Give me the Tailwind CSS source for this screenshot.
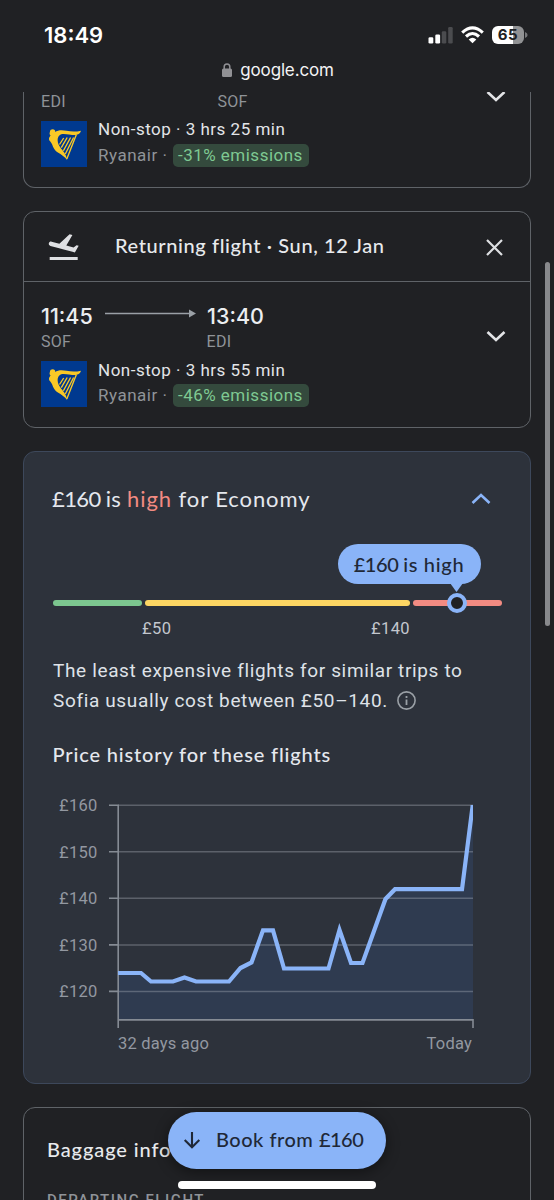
<!DOCTYPE html>
<html lang="en">
<head>
<meta charset="utf-8">
<title>Flights</title>
<script src="https://cdn.jsdelivr.net/npm/@tailwindcss/browser@4"></script>
</head>
<body class="bg-[#202124]">
<svg class="hidden">
  <symbol id="harp" viewBox="0 0 46 46">
    <path fill="#f9c926" d="M9 10.500C9 8.500 12 7.500 13.600 8.900C14.300 9.600 14.300 10.300 14 10.900C17 8.900 21.500 8.900 25.500 9.800C30.500 10.900 35 10.900 40 9.700C39.300 11.800 38.200 13 36.500 13.500L34.600 14C29 14 25 12.600 21.500 13C18 13.500 16.500 16 16.700 20C17 24.500 20.800 28 23.500 32C24.700 34 25.400 35.700 25.900 37.500L26 39C24 36 20.500 33.800 16.500 31.300C12.500 28.800 11.800 24 10.200 21.700C9 20 7.800 19.500 8 17.500C8.200 15.800 9.300 15.300 9.500 14.200C8 13.500 8.700 11.900 9 10.500Z"/>
    <path fill="none" stroke="#f9c926" stroke-width="1.350" d="M22.700 17L18.500 23.500M26.200 16.500L20.300 26.700M29.600 16.500L22.400 29.800M32.600 16.500L24.300 33M35.400 13.500L25.800 38"/>
  </symbol>
</svg>
<div class="relative h-[1200px] w-[554px] overflow-hidden bg-[#202124] font-['Roboto',sans-serif]">

  <!-- Status bar and address -->
  <header class="h-[92px]">
    <div class="flex h-[60px] items-start justify-between pt-[22px] pr-[26px] pl-11">
      <div class="font-['Inter',sans-serif] text-[22px] leading-[27px] font-semibold text-white">18:49</div>
      <div class="flex items-start pt-1">
        <svg class="mt-[1px] h-[17px] w-[25px]" viewBox="0 0 25 17"><g fill="#fff"><rect x="0.500" y="10.200" width="4.800" height="6.300" rx="1.300"/><rect x="7.300" y="7.500" width="4.800" height="9" rx="1.300"/></g><g fill="#4b4c4f"><rect x="13.800" y="4.200" width="4.500" height="12.300" rx="1.300"/><rect x="20.200" y="0" width="4.500" height="16.500" rx="1.300"/></g></svg>
        <svg class="ml-2 h-[18px] w-[23px]" viewBox="0 0 23 18"><g fill="none" stroke="#fff" stroke-width="3.100"><path d="M1.200 6.600Q11.500 -2.700 21.800 6.600"/><path d="M5 10.500Q11.500 4.500 18 10.500"/></g><path fill="#fff" d="M7.700 13.400Q11.500 10.200 15.300 13.400L11.500 17.200Z"/></svg>
        <div class="ml-2 flex h-[18px] w-[32px] items-center justify-center rounded-[6px] bg-linear-to-r from-white from-65% to-[#919294] to-65% font-['Inter',sans-serif] text-[15px] leading-[18px] font-bold tracking-[0.5px] text-[#202124]">65</div>
        <svg class="mt-[6px] ml-[1px] h-[6px] w-[3px]" viewBox="0 0 3 6"><path fill="#76777a" d="M0 0Q2.600 1 2.600 3Q2.600 5 0 6Z"/></svg>
      </div>
    </div>
    <div class="flex justify-center gap-[8px] pl-[2px]">
      <svg class="mt-[3px] h-[14px] w-[10px]" viewBox="0 0 10 14"><rect y="5.500" width="10" height="8.500" rx="1.500" fill="#919195"/><path d="M2.200 6V3.800a2.800 2.800 0 0 1 5.600 0V6" fill="none" stroke="#919195" stroke-width="1.500"/></svg>
      <div class="font-['Inter',sans-serif] text-[17px] leading-5 tracking-[-0.15px] text-[#f3f3f4]">google.com</div>
    </div>
  </header>

  <main class="flex flex-col gap-[23px] px-[23px]">
    <!-- Departing flight, scrolled under the address bar -->
    <section class="flex h-24 flex-col overflow-hidden rounded-b-xl border-x-[1.5px] border-b-[1.5px] border-[#5f6368] pr-6 pl-[17px]">
      <div class="flex h-[28px] justify-between text-base leading-[19px] text-[#8f9398]">
        <div class="flex"><span class="w-[176.500px] tracking-[0.3px]">EDI</span><span class="tracking-[0.3px]">SOF</span></div>
        <svg class="mt-[-2px] h-[12px] w-[20px]" viewBox="0 0 20 12"><path d="M1.500 2L10 10L18.500 2" fill="none" stroke="#e3e4e7" stroke-width="2.600"/></svg>
      </div>
      <div class="flex gap-[11px]">
        <div class="mt-[1px] h-[46px] w-[46px] bg-[#00398f]"><svg class="h-[46px] w-[46px]"><use href="#harp"/></svg></div>
        <div class="text-[17px] whitespace-nowrap">
          <div class="leading-[19px] tracking-[0.5px] text-[#e3e5e8]">Non-stop · 3 hrs 25 min</div>
          <div class="mt-[5px] flex items-center leading-[23px] text-[#8f9398]"><span class="w-[75px] tracking-[0.5px]">Ryanair ·</span><span class="h-[23px] w-[136px] rounded-[5px] bg-[#344a3d] pl-[5px] tracking-[0.48px] text-[#7fc992]">-31% emissions</span></div>
        </div>
      </div>
    </section>

    <!-- Returning flight -->
    <section class="h-[217px] rounded-xl border-[1.5px] border-[#5f6368]">
      <div class="flex h-[70px] items-center border-b-[1.5px] border-[#5f6368] pr-[27px] pl-[22px]">
        <svg class="h-[35.4px] w-[35.4px] shrink-0 -scale-x-100" viewBox="0 0 24 24" fill="#dfe0e3"><path d="M2.500 19h19v2h-19zM22.070 9.640c-.21-.8-1.040-1.280-1.840-1.060L14.920 10l-6.900-6.430-1.930.51 4.140 7.170-4.970 1.330-1.970-1.540-1.450.39 1.820 3.160.77 1.330 1.600-.43 5.310-1.420 4.350-1.160L21 11.490c.81-.23 1.280-1.050 1.070-1.850z"/></svg>
        <div class="mt-[-4px] ml-[33.600px] font-['Lato',sans-serif] text-[20px] leading-6 font-medium tracking-[0.61px] whitespace-nowrap text-[#e8eaed]">Returning flight · Sun, 12 Jan</div>
        <svg class="mt-[2px] ml-auto h-[17px] w-[17px]" viewBox="0 0 17 17"><path d="M1 1L16 16M16 1L1 16" stroke="#dddfe2" stroke-width="2.200"/></svg>
      </div>
      <div class="flex justify-between pr-6 pl-[17px]">
        <div>
          <div class="mt-[20px] flex font-['Inter',sans-serif] text-[21.500px] leading-[28px] font-medium whitespace-nowrap text-[#eceef1]">
            <span class="w-[64px]">11:45</span>
            <svg class="mt-[7px] mr-[11px] h-[10px] w-[91px]" viewBox="0 0 91 10"><path d="M0 4.500H86" stroke="#9aa0a6" stroke-width="1.600"/><path d="M84 .5L91 4.500L84 8.500Z" fill="#9aa0a6"/></svg>
            <span>13:40</span>
          </div>
          <div class="mt-[2px] flex text-base leading-[19px] tracking-[0.3px] text-[#8f9398]"><span class="w-[165.500px]">SOF</span><span>EDI</span></div>
        </div>
        <svg class="mt-[48px] h-[12px] w-[20px]" viewBox="0 0 20 12"><path d="M1.500 2L10 10L18.500 2" fill="none" stroke="#e3e4e7" stroke-width="2.600"/></svg>
      </div>
      <div class="mt-[9px] flex gap-[11px] pl-[17px]">
        <div class="mt-[1px] h-[46px] w-[46px] bg-[#00398f]"><svg class="h-[46px] w-[46px]"><use href="#harp"/></svg></div>
        <div class="text-[17px] whitespace-nowrap">
          <div class="mt-[1px] leading-[19px] tracking-[0.5px] text-[#e3e5e8]">Non-stop · 3 hrs 55 min</div>
          <div class="mt-[4px] flex items-center leading-[23px] text-[#8f9398]"><span class="w-[75px] tracking-[0.5px]">Ryanair ·</span><span class="h-[23px] w-[136px] rounded-[5px] bg-[#344a3d] pl-[5px] tracking-[0.48px] text-[#7fc992]">-46% emissions</span></div>
        </div>
      </div>
    </section>

    <!-- Price insight -->
    <section class="h-[633px] rounded-xl border-[1.5px] border-[#3d485b] bg-[#2d323b] px-7">
      <div class="mt-[33px] flex items-center justify-between pr-[11px]">
        <h2 class="font-['Lato',sans-serif] text-[22px] leading-[28px] tracking-[0.92px] whitespace-nowrap text-[#e5e8ee]"><span class="tracking-[-0.6px]">£160 </span><span class="tracking-[0.3px]">is </span><span class="text-[#f28b82]">high</span> for Economy</h2>
        <svg class="h-[12px] w-[20px]" viewBox="0 0 20 12"><path d="M1.500 10L10 2L18.500 10" fill="none" stroke="#8ab4f8" stroke-width="2.600"/></svg>
      </div>
      <div class="relative mt-[87px] ml-[0.5px] flex h-[6px] w-[449px] gap-[3px]">
        <div class="w-[89px] rounded-full bg-[#7cc68f]"></div>
        <div class="w-[265px] rounded-full bg-[#fdd663]"></div>
        <div class="w-[89px] rounded-full bg-[#f28b82]"></div>
        <div class="absolute top-[-56.5px] left-[285px] h-10 w-[143px] rounded-full bg-[#8ab4f8] text-center font-['Lato',sans-serif] text-[20px] leading-[40px] font-medium tracking-[0.7px] text-[#202837]"><span class="tracking-[-0.4px]">£160 </span>is high</div>
        <svg class="absolute top-[-17px] left-[397px] h-[9px] w-[13px]" viewBox="0 0 13 9"><path d="M0 0H13L6.500 9Z" fill="#8ab4f8"/></svg>
        <div class="absolute top-[-7px] left-[394px] h-5 w-5 rounded-full border-[4.500px] border-[#8ab4f8] bg-[#202124]"></div>
      </div>
      <div class="mt-[13px] flex text-[16.500px] leading-[20px] tracking-[0.4px] text-[#c3c7ce]"><span class="ml-[90px] w-[229px]">£50</span><span>£140</span></div>
      <div class="mt-[17px] pl-[1px] text-[19px] leading-[30px] tracking-[0.64px] whitespace-nowrap text-[#dfe2e8]">
        <div>The least expensive flights for similar trips to</div>
        <div class="flex items-center">Sofia usually cost between £50–140.
          <svg class="mt-[-2px] ml-[9px] h-[19px] w-[19px]" viewBox="0 0 19 19"><circle cx="9.500" cy="9.500" r="8.600" fill="none" stroke="#9aa0a6" stroke-width="1.600"/><path d="M8.600 8.500h1.800v5.500H8.600zM8.600 5h1.800v1.900H8.600z" fill="#9aa0a6"/></svg>
        </div>
      </div>
      <h3 class="mt-[24px] pl-[0.5px] font-['Lato',sans-serif] text-[20px] leading-[28px] font-medium tracking-[0.85px] whitespace-nowrap text-[#e5e8ee]">Price history for these flights</h3>
      <div class="mt-[27px] flex">
        <div class="mt-[1px] flex w-[56px] flex-col gap-[26.600px] pl-[7px] text-[16.500px] leading-[20px] tracking-[0.3px] text-[#9398a1]"><span>£160</span><span>£150</span><span>£140</span><span>£130</span><span>£120</span></div>
        <svg class="mt-[8px] h-[228px] w-[370px]" viewBox="108 803 370 228">
          <path d="M118 973H141L151 981.700H173L184.500 977.700L196 981.700H229L240.500 968L251.500 962.500L263 930.700H273L284 968.500H328.500L339.500 930L351 963H362.500L374 931L385.500 899L395 889.200H462L473 805V1020H118Z" fill="#2f3b50"/>
          <path d="M118 805.200H473M118 851.700H473M118 898.300H473M118 944.900H473M118 991.400H473" stroke="#b4bac4" stroke-opacity=".35" stroke-width="1.500"/>
          <path d="M109 805.200H118M109 851.700H118M109 898.300H118M109 944.900H118M109 991.400H118M118.200 804.500V1028M118 1019.900H473V1028" fill="none" stroke="#858b94" stroke-width="1.600"/>
          <clipPath id="plot"><path d="M118 805H473V1020H118Z"/></clipPath>
          <path clip-path="url(#plot)" d="M118 973H141L151 981.500H173L184.500 977.500L196 981.500H229L240.500 968L251.500 962.500L263 930.300H273L284 968.500H328.500L339.500 930L351 963H362.500L374 931L385.500 899L395 889.200H462L473 803" fill="none" stroke="#8ab4f8" stroke-width="4.200"/>
        </svg>
      </div>
      <div class="mt-[2px] flex w-[420px] justify-between pl-[66px] text-[16.500px] leading-[22px] tracking-[0.2px] text-[#9398a1]"><span>32 days ago</span><span>Today</span></div>
    </section>

    <!-- Baggage -->
    <section class="h-[120px] shrink-0 rounded-t-xl border-[1.5px] border-[#5f6368] px-[23px] pt-[27px] whitespace-nowrap">
      <h3 class="font-['Lato',sans-serif] text-[20px] leading-[28px] font-medium tracking-[0.9px] text-[#e8eaed]">Baggage info</h3>
      <div class="mt-[27px] text-[15px] leading-[20px] font-medium tracking-[1.500px] text-[#8f9398]">DEPARTING FLIGHT</div>
    </section>
  </main>

  <!-- Scrollbar -->
  <div class="absolute top-[262px] left-[545px] h-[364px] w-[5px] rounded-full bg-[#88898c]"></div>

  <!-- Booking button and home indicator -->
  <div class="absolute top-[1112px] left-[168px] flex h-[57px] w-[218px] items-center rounded-full bg-[#8ab4f8] pl-[15px] shadow-[0_3px_14px_rgba(0,0,0,0.45)]">
    <svg class="mt-[-2px] h-[18px] w-[18px]" viewBox="0 0 18 18"><path d="M9 1V16M1.700 9L9 16.200L16.300 9" fill="none" stroke="#202837" stroke-width="2.100"/></svg>
    <span class="mt-[-4px] ml-[15px] font-['Lato',sans-serif] text-[20px] leading-7 font-medium tracking-[0.500px] whitespace-nowrap text-[#202837]">Book from <span class="tracking-[-0.5px]">£160</span></span>
  </div>
  <div class="absolute top-[1181px] left-[178px] h-2 w-[198px] rounded-full bg-white"></div>
</div>
</body>
</html>
